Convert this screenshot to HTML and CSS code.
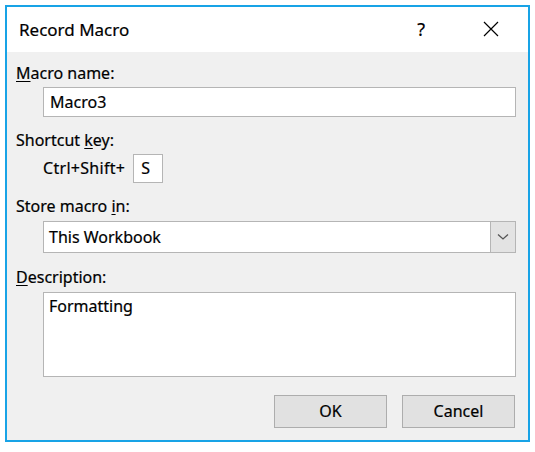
FILE: index.html
```html
<!DOCTYPE html>
<html>
<head>
<meta charset="utf-8">
<link rel="stylesheet" href="styles.css">
</head>
<body>
<div class="dialog">
  <div class="titlebar">
    <span class="title">Record Macro</span>
    <span class="help">?</span>
    <svg class="close" width="16" height="16" viewBox="0 0 16 16"><path d="M1 1 L15 15 M15 1 L1 15" stroke="#000" stroke-width="1.2" fill="none"/></svg>
  </div>
  <div class="content">
    <div class="label"><u>M</u>acro name:</div>
    <div class="field input">Macro3</div>
    <div class="label l-gap">Shortcut <u>k</u>ey:</div>
    <div class="shortcut">
      <span class="ctrl">Ctrl+Shift+</span>
      <span class="field key">S</span>
    </div>
    <div class="label l-gap">Store macro <u>i</u>n:</div>
    <div class="field select">
      <span class="sel-text">This Workbook</span>
      <span class="drop"><svg width="12" height="8" viewBox="0 0 12 8"><path d="M1 1.5 L6 6 L11 1.5" stroke="#555" stroke-width="1.3" fill="none"/></svg></span>
    </div>
    <div class="label l-gap2"><u>D</u>escription:</div>
    <div class="field textarea">Formatting</div>
    <div class="buttons">
      <div class="btn">OK</div>
      <div class="btn">Cancel</div>
    </div>
  </div>
</div>
</body>
</html>
```
FILE: styles.css
```css
html, body {
  margin: 0;
  padding: 0;
  background: #ffffff;
}
body {
  font-family: "Noto Sans", "Open Sans", sans-serif;
  font-size: 16px;
  color: #000;
  -webkit-text-stroke: 0.2px #000;
}
.dialog {
  margin: 5px 0 0 5px;
  width: 521px;
  height: 433px;
  border: 2px solid #18a3e6;
  display: flex;
  flex-direction: column;
  background: #f0f0f0;
}
.titlebar {
  height: 45px;
  background: #fff;
  display: flex;
  align-items: center;
  padding-left: 12px;
  box-sizing: border-box;
  flex: none;
}
.title {
  font-size: 17px;
  flex: 1;
  margin-top: -1px;
}
.help {
  font-size: 18px;
  margin-right: 58px;
  margin-top: -2px;
}
.close {
  margin-right: 29px;
  margin-top: -1px;
}
.content {
  flex: 1;
  padding: 11px 12px 0 9px;
  display: flex;
  flex-direction: column;
}
.label {
  height: 20px;
  line-height: 20px;
  margin-bottom: 4px;
}
.l-gap { margin-top: 13px; }
.l-gap2 { margin-top: 14px; margin-bottom: 5px; }
.label u {
  text-decoration-thickness: 1px;
  text-underline-offset: 2px;
}
.field {
  background: #fff;
  border: 1px solid #b5b5b5;
  box-sizing: border-box;
}
.input {
  margin-left: 27px;
  height: 30px;
  line-height: 28px;
  padding-left: 6px;
}
.shortcut {
  margin-left: 27px;
  display: flex;
  align-items: center;
  height: 29px;
}
.ctrl {
  margin-right: 8px;
  margin-top: -1px;
  letter-spacing: 0.3px;
}
.key {
  width: 30px;
  height: 29px;
  line-height: 27px;
  padding-left: 7px;
}
.select {
  margin-left: 27px;
  margin-top: 1px;
  height: 32px;
  display: flex;
  align-items: stretch;
}
.sel-text {
  flex: 1;
  line-height: 30px;
  padding-left: 5px;
}
.drop {
  width: 24px;
  background: #e3e3e3;
  border-left: 1px solid #b5b5b5;
  display: flex;
  align-items: center;
  justify-content: center;
}
.textarea {
  margin-left: 27px;
  height: 85px;
  padding: 3px 5px;
  line-height: 20px;
}
.buttons {
  display: flex;
  justify-content: flex-end;
  gap: 15px;
  margin-top: 18px;
  padding-right: 1px;
}
.btn {
  width: 113px;
  height: 33px;
  box-sizing: border-box;
  background: #e1e1e1;
  border: 1px solid #adadad;
  text-align: center;
  line-height: 30px;
}
```
